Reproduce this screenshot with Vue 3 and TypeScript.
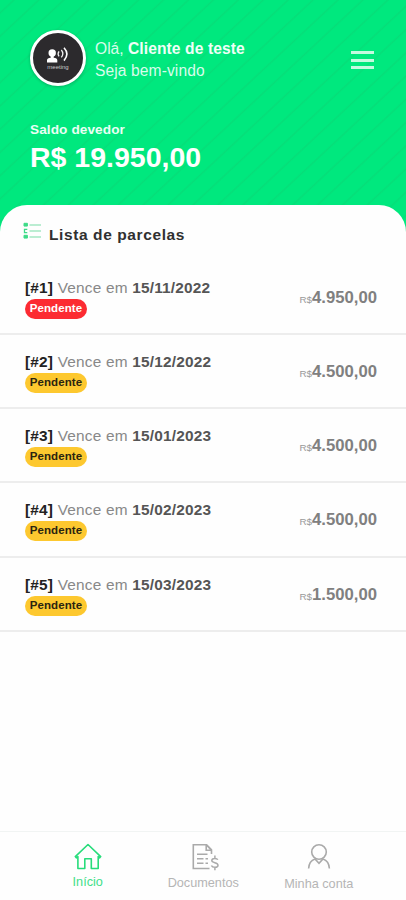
<script setup lang="ts">
interface Installment {
  id: number
  due: string
  amount: string
  late: boolean
}

const installments: Installment[] = [
  { id: 1, due: '15/11/2022', amount: '4.950,00', late: true },
  { id: 2, due: '15/12/2022', amount: '4.500,00', late: false },
  { id: 3, due: '15/01/2023', amount: '4.500,00', late: false },
  { id: 4, due: '15/02/2023', amount: '4.500,00', late: false },
  { id: 5, due: '15/03/2023', amount: '1.500,00', late: false },
]
</script>

<template>
  <div class="app">
    <header class="hero">
      <div class="top">
        <div class="avatar">
          <svg width="24" height="21" viewBox="0 0 24 21" fill="none">
            <circle cx="6.2" cy="5.9" r="3.7" fill="#fff" />
            <path d="M4.7 8h3v2.700c2.300.3 3.600 1 3.600 2.500v2.200H1v-2.200c0-1.500 1.400-2.200 3.700-2.500z" fill="#fff" />
            <path d="M13 4.300q-1.800 2.500 0 5M15.300 3q3 3.600 0 7.400" stroke="#eee" stroke-width="1.300" />
            <path d="M18 .8q5.800 6.200 0 12.800" stroke="#fff" stroke-width="1.600" />
          </svg>
          <span class="brand">meeting</span>
        </div>
        <div class="greeting">
          <div>Olá, <b>Cliente de teste</b></div>
          <div class="welcome">Seja bem-vindo</div>
        </div>
        <button class="menu" aria-label="Menu"><i /><i /><i /></button>
      </div>
      <div class="label">Saldo devedor</div>
      <div class="total">R$ 19.950,00</div>
    </header>

    <main class="sheet">
      <h1 class="title">
        <svg width="19" height="18" viewBox="0 0 19 18" fill="none">
          <path d="M6.500 3H18M6.500 9H18M6.500 15H18" stroke="#a5e8c3" stroke-width="1.300" />
          <path d="M1 1.300h3.400v2.800H1zM1 13.300h3.400v2.800H1z" fill="#3edb88" stroke="#3edb88" />
          <path d="M4.300 7.400H1.500v3.200h2.800" stroke="#3edb88" stroke-width="1.300" />
        </svg>
        <span>Lista de parcelas</span>
      </h1>
      <ul class="list">
        <li v-for="item in installments" :key="item.id" class="row">
          <div>
            <div class="due"><b class="num">[#{{ item.id }}]</b> <span>Vence em</span> <b>{{ item.due }}</b></div>
            <span class="badge" :class="{ late: item.late }">Pendente</span>
          </div>
          <div class="amount"><small>R$</small>{{ item.amount }}</div>
        </li>
      </ul>
    </main>

    <nav class="tabs">
      <a class="tab active">
        <svg width="28" height="28" viewBox="0 0 28 28" fill="none" stroke="#27dc7b" stroke-width="1.600" stroke-linejoin="round">
          <path d="M1.300 13.600 14 1.500l12.700 12.100-1 1.200-1.500-1.200v11.900h-6.900v-9.700h-6.500v9.700H3.900V13.600l-1.600 1.200z" />
        </svg>
        <span>Início</span>
      </a>
      <a class="tab docs">
        <svg width="28" height="28" viewBox="0 0 28 28" fill="none" stroke="#aaa" stroke-width="1.600">
          <path d="M18.500 25.500H2.300V1.700h13.200l5 5.200v4.200M15.200 1.700v5.500h5.300" />
          <path d="M15.500 2l4.800 5" />
          <path d="M6 11.300h10.500M6 15.800h6.500M14.500 15.800h2.500M6 20.300h6.500M14.500 20.300h2.500" stroke-width="1.400" />
          <path d="M26.800 16.800c-.9-1.900-6-2-6 .7 0 2.800 6.200 1.600 6.200 4.700 0 2.800-5.600 2.800-6.600.3M23.900 12.600v2.800M23.900 24.300v3" stroke-width="1.500" />
        </svg>
        <span>Documentos</span>
      </a>
      <a class="tab account">
        <svg width="28" height="28" viewBox="0 0 28 28" fill="none" stroke="#aaa" stroke-width="1.600">
          <circle cx="14" cy="9" r="7.300" />
          <path d="M3.600 25.500c.3-5 2.400-8.300 6.400-9.600l4 4.500 4-4.500c4 1.300 6.100 4.600 6.400 9.600" />
        </svg>
        <span>Minha conta</span>
      </a>
    </nav>
  </div>
</template>

<style>
body {
  margin: 0;
  background: #fefefe;
}
</style>

<style scoped>
.app {
  box-sizing: border-box;
  width: 100%;
  height: 900px;
  display: flex;
  flex-direction: column;
  overflow: hidden;
  background: #fefefe;
  font-family: 'Liberation Sans', Arial, sans-serif;
}
.hero {
  box-sizing: border-box;
  flex: none;
  height: 240px;
  padding: 29px 32.5px 0 30px;
  color: #fff;
  background: repeating-linear-gradient(137deg, #00e87e 0 8px, #06de79 9.5px, #00e87e 11px 17px);
}
.top {
  display: flex;
  align-items: center;
  height: 57px;
}
.avatar {
  box-sizing: border-box;
  width: 56px;
  height: 56px;
  flex: none;
  border: 3px solid #fff;
  border-radius: 50%;
  background: #2c2a2d;
  box-shadow: 0 1px 3px rgba(0, 50, 25, 0.3);
  display: flex;
  flex-direction: column;
  align-items: center;
  padding-top: 14.500px;
}
.avatar svg {
  flex: none;
  height: 21px;
}
.brand {
  margin-top: -4px;
  font-size: 6px;
  line-height: 6px;
  color: #ccc;
}
.greeting {
  margin: 5px 0 0 9px;
  font-size: 15.600px;
  line-height: 22px;
  color: #d9fceb;
}
.greeting b {
  color: #effff7;
  letter-spacing: 0.1px;
}
.welcome {
  letter-spacing: 0.1px;
}
.menu {
  margin: 5px 0 0 auto;
  padding: 0;
  border: 0;
  background: none;
  display: grid;
  gap: 4.5px;
}
.menu i {
  width: 23px;
  height: 3px;
  background: #c4fae0;
}
.label {
  margin: 36px 0 0;
  font-size: 13.600px;
  line-height: 16px;
  font-weight: 700;
  letter-spacing: 0.1px;
  color: #e9fff4;
}
.total {
  margin: 3px 0 0;
  font-size: 28.5px;
  line-height: 32px;
  font-weight: 700;
}
.sheet {
  flex: 1;
  margin-top: -35.5px;
  border-radius: 27px 27px 0 0;
  background: #fefefe;
}
.title {
  display: flex;
  align-items: flex-start;
  gap: 7px;
  height: 38.500px;
  margin: 0;
  padding: 17.500px 0 0 23px;
  font-size: 15.5px;
  line-height: 26px;
  letter-spacing: 0.6px;
  color: #303030;
}
.list {
  margin: 0;
  padding: 0;
  list-style: none;
}
.row {
  box-sizing: border-box;
  height: 74.300px;
  padding: 18px 29px 0 25px;
  border-bottom: 2px solid #ededed;
  display: flex;
  justify-content: space-between;
}
.due {
  font-size: 15.400px;
  line-height: 18px;
  letter-spacing: 0.2px;
  color: #888;
}
.due b {
  color: #555;
}
.due .num {
  color: #222;
}
.badge {
  display: block;
  box-sizing: border-box;
  width: 62px;
  height: 20px;
  margin-top: 2px;
  border-radius: 10px;
  background: #fdc82f;
  color: #2b2410;
  font-size: 11.500px;
  line-height: 19px;
  font-weight: 700;
  letter-spacing: 0.1px;
  text-align: center;
}
.badge.late {
  background: #fc2b32;
  color: #fff;
}
.amount {
  padding-top: 9px;
  font-size: 16.700px;
  line-height: 20px;
  font-weight: 700;
  color: #808080;
}
.amount small {
  font-size: 9.800px;
  font-weight: 400;
  color: #999;
}
.tabs {
  box-sizing: border-box;
  flex: none;
  height: 69px;
  padding: 11px 29.5px 0 30px;
  border-top: 1px solid #f1f4f3;
  display: grid;
  grid-template-columns: repeat(3, 1fr);
}
.tab {
  display: flex;
  flex-direction: column;
  align-items: center;
  font-size: 12.700px;
  line-height: 14px;
  color: #b5b5b5;
}
.tab span {
  margin-top: 4px;
}
.active {
  color: #42df8a;
}
.docs span {
  margin-top: 5px;
}
.docs svg {
  margin-left: 4px;
}
.account span {
  margin-top: 6px;
}
</style>
